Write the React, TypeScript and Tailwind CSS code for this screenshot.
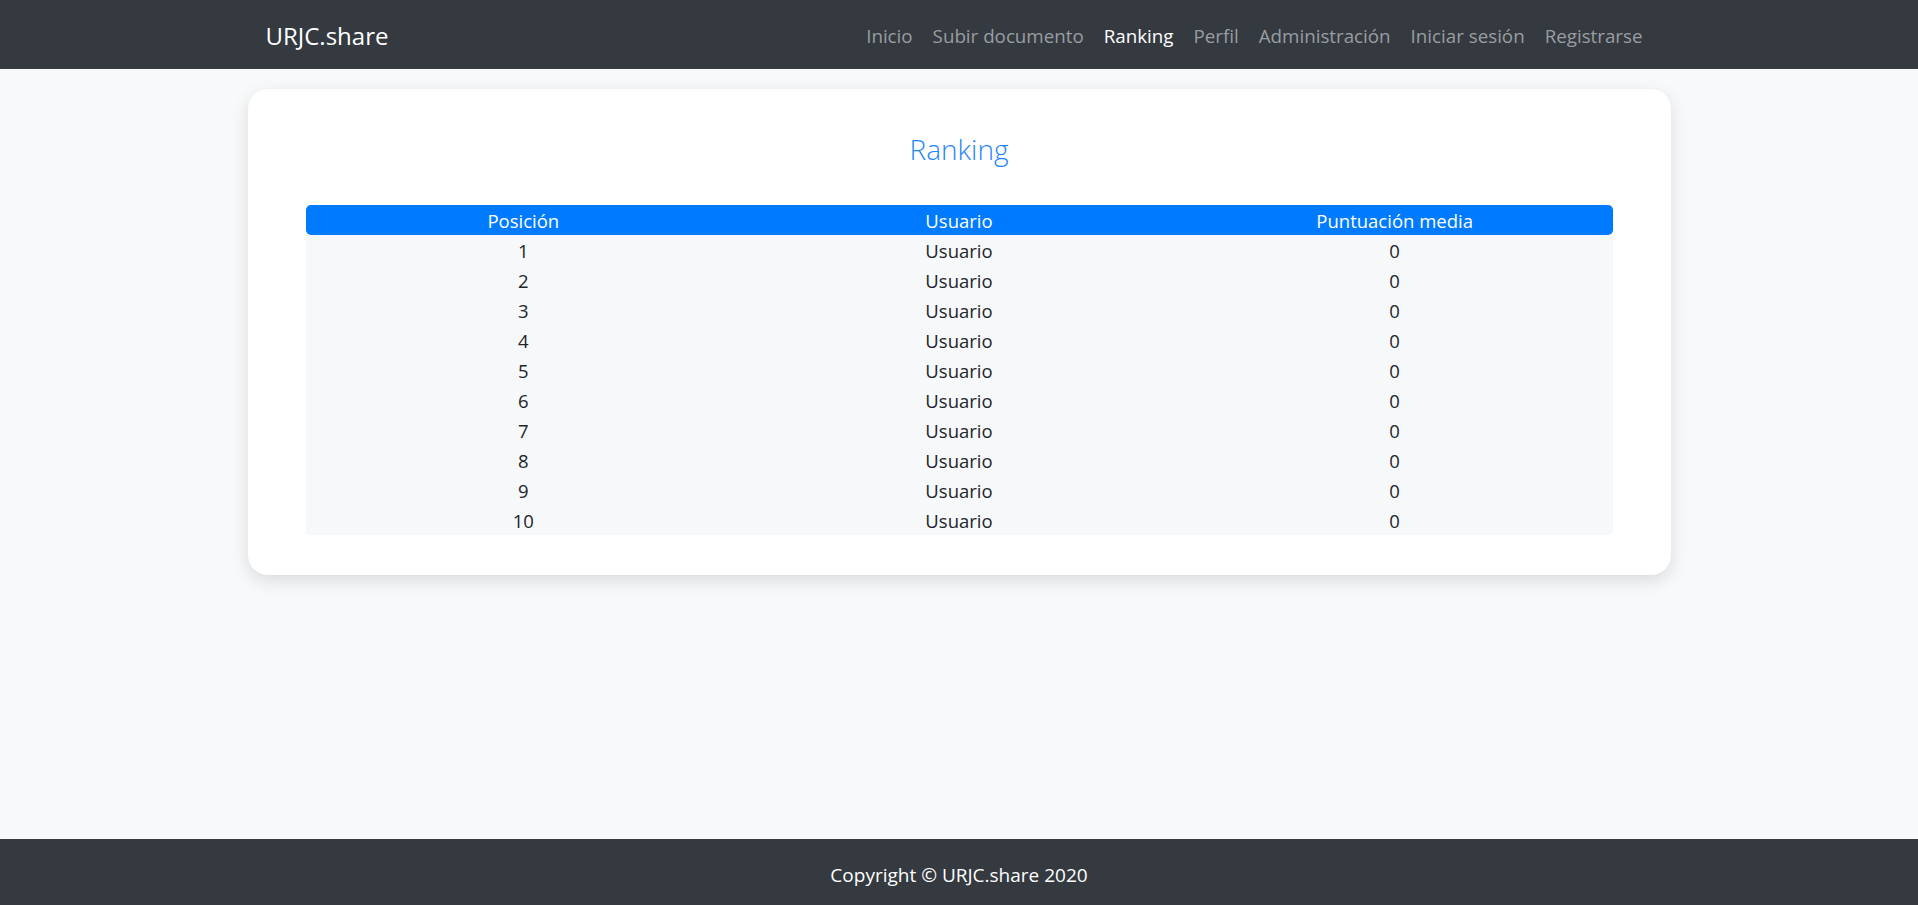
const links = [
  { label: "Inicio" },
  { label: "Subir documento" },
  { label: "Ranking", active: true },
  { label: "Perfil" },
  { label: "Administración" },
  { label: "Iniciar sesión" },
  { label: "Registrarse" },
];

const rows = Array.from({ length: 10 }, (_, i) => ({
  pos: i + 1,
  user: "Usuario",
  score: 0,
}));

function Navbar() {
  return (
    <nav className="h-[69px] shrink-0 bg-[#343a40]">
      <div className="mx-auto flex h-full w-[1425px] items-center justify-between px-[19px] pt-[2px]">
        <a className="text-[24px] leading-none text-white">URJC.share</a>
        <ul className="flex items-center">
          {links.map((l) => (
            <li key={l.label}>
              <a
                className={
                  "block px-[10px] text-[18.75px] leading-[30px] " +
                  (l.active ? "text-white" : "text-[#9a9da0]")
                }
              >
                {l.label}
              </a>
            </li>
          ))}
        </ul>
      </div>
    </nav>
  );
}

function RankingTable() {
  return (
    <div className="text-center text-[18.5px]">
      <div className="grid h-[30px] grid-cols-3 rounded-[5px] bg-[#007bff] pt-[1px] leading-[29px] text-white">
        <div>Posición</div>
        <div>Usuario</div>
        <div>Puntuación media</div>
      </div>
      <div className="rounded-b-[4px] bg-[#f7f8fa] text-[#212529]">
        {rows.map((r) => (
          <div key={r.pos} className="grid h-[30px] grid-cols-3 pt-[2px] leading-[28px]">
            <div>{r.pos}</div>
            <div>{r.user}</div>
            <div>{r.score}</div>
          </div>
        ))}
      </div>
    </div>
  );
}

export default function App() {
  return (
    <div
      className="flex min-h-screen flex-col bg-[#f8f9fa]"
      style={{ fontFamily: '"Open Sans", "Noto Sans", sans-serif' }}
    >
      <Navbar />
      <main className="flex-1 pt-[20px]">
        <div className="mx-auto w-[1423px] rounded-[20px] bg-white px-[58px] pt-[38px] pb-[40px] shadow-[0_6px_18px_rgba(0,0,0,0.12)]">
          <h2 className="mb-[34px] text-center text-[28px] font-light leading-[44px] text-[#1f86fb]">
            Ranking
          </h2>
          <RankingTable />
        </div>
      </main>
      <footer className="flex h-[66px] shrink-0 items-center justify-center bg-[#343a40]">
        <p className="pt-[5px] text-[19px] leading-[30px] text-white">Copyright © URJC.share 2020</p>
      </footer>
    </div>
  );
}
